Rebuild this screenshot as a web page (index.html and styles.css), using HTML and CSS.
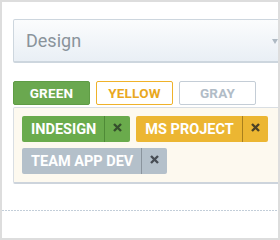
FILE: index.html
```html
<!DOCTYPE html>
<html lang="en">
<head>
    <meta charset="UTF-8">
    <meta name="viewport" content="width=device-width, initial-scale=1.0">
    <title>Tag Picker</title>
    <link rel="stylesheet" href="styles.css">
</head>
<body>
    <div class="frame">
        <div class="panel">
            <div class="select">
                <span class="select-value">Design</span>
                <span class="caret"></span>
            </div>

            <div class="filters">
                <button type="button" class="filter filter-green">Green</button>
                <button type="button" class="filter filter-yellow">Yellow</button>
                <button type="button" class="filter filter-gray">Gray</button>
            </div>

            <div class="tags">
                <span class="tag tag-green">
                    <span class="tag-label">InDesign</span>
                    <button type="button" class="tag-remove"><svg width="9" height="9" viewBox="0 0 9 9"><path d="M1 1L8 8M8 1L1 8"/></svg></button>
                </span>
                <span class="tag tag-yellow">
                    <span class="tag-label">MS Project</span>
                    <button type="button" class="tag-remove"><svg width="9" height="9" viewBox="0 0 9 9"><path d="M1 1L8 8M8 1L1 8"/></svg></button>
                </span>
                <span class="tag tag-gray">
                    <span class="tag-label">Team App Dev</span>
                    <button type="button" class="tag-remove"><svg width="9" height="9" viewBox="0 0 9 9"><path d="M1 1L8 8M8 1L1 8"/></svg></button>
                </span>
            </div>
        </div>

        <div class="divider"></div>
    </div>
</body>
</html>
```

FILE: styles.css
```css
body {
    margin: 0;
    font-family: Roboto, 'Liberation Sans', sans-serif;
    background-color: #fff;
}
.frame {
    width: 280px;
    height: 240px;
    box-sizing: border-box;
    border: 2px solid #dddddd;
    overflow: hidden;
}
.panel {
    width: 300px;
    padding: 17px 0 0 11px;
}
.select {
    height: 44px;
    box-sizing: border-box;
    display: flex;
    align-items: center;
    padding: 0 0 0 12px;
    border: 1px solid #cdd6de;
    border-bottom-width: 2px;
    border-radius: 2px;
    background: linear-gradient(#fbfcfd, #e9eff5);
}
.select-value {
    font-size: 18px;
    color: #8a939b;
    flex: 1;
}
.caret {
    width: 0;
    height: 0;
    border-left: 3.5px solid transparent;
    border-right: 3.5px solid transparent;
    border-top: 5px solid #aeb9c3;
    margin: 1px 34px 0 0;
}
.filters {
    display: flex;
    gap: 6px;
    margin-top: 18px;
}
.filter {
    width: 77px;
    height: 24px;
    box-sizing: border-box;
    padding: 0;
    border: 1px solid;
    border-radius: 2px;
    font-family: inherit;
    font-size: 13.5px;
    font-weight: bold;
    text-transform: uppercase;
    letter-spacing: 0.2px;
    background: #fff;
}
.filter-green {
    background-color: #6aa84f;
    border-color: #5f9c45;
    color: #fff;
}
.filter-yellow {
    border-color: #efb22a;
    color: #e9a81e;
}
.filter-gray {
    border-color: #c4cdd6;
    color: #b1bcc7;
}
.tags {
    margin-top: 2px;
    display: flex;
    flex-wrap: wrap;
    gap: 6px;
    padding: 8px;
    background-color: #fdf9ef;
    border: 1px solid #d9dee3;
    border-bottom: 2px solid #cdd4dc;
    border-radius: 2px;
}
.tag {
    display: flex;
    height: 26px;
    border-radius: 2px;
    color: #fff;
}
.tag-label {
    display: flex;
    align-items: center;
    padding: 0 8px 0 9px;
    font-size: 14.5px;
    font-weight: bold;
    text-transform: uppercase;
}
.tag-remove {
    width: 26px;
    padding: 0 0 3px;
    border: none;
    border-left: 1px solid;
    background: none;
    display: flex;
    align-items: center;
    justify-content: center;
}
.tag-remove svg {
    fill: none;
    stroke-width: 2.4;
}
.tag-green {
    background-color: #6aab4c;
}
.tag-green .tag-remove {
    border-color: #4f8a37;
}
.tag-green svg {
    stroke: #35502c;
}
.tag-yellow {
    background-color: #ecb632;
}
.tag-yellow .tag-remove {
    border-color: #a97f1c;
}
.tag-yellow svg {
    stroke: #4d4226;
}
.tag-gray {
    background-color: #b4c0ca;
}
.tag-gray .tag-remove {
    border-color: #8a949d;
}
.tag-gray svg {
    stroke: #474d54;
}
.divider {
    margin-top: 26px;
    height: 1px;
    background-image: linear-gradient(to right, #c3ced9 2px, transparent 2px);
    background-size: 3px 1px;
}
```
